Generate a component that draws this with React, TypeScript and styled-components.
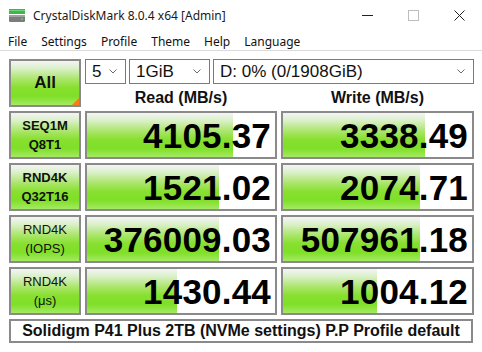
import styled, { createGlobalStyle } from 'styled-components';

const GlobalStyle = createGlobalStyle`
  html, body {
    margin: 0;
    padding: 0;
    background: #ffffff;
  }
  body {
    font-family: 'Liberation Sans', Arial, sans-serif;
  }
`;

type Result = {
  label: string;
  sub: string;
  bold: boolean;
  read: string;
  readFill: number;
  write: string;
  writeFill: number;
};

// fill widths in px, measured inside the cell border
const results: Result[] = [
  { label: 'SEQ1M', sub: 'Q8T1', bold: true, read: '4105.37', readFill: 146, write: '3338.49', writeFill: 142 },
  { label: 'RND4K', sub: 'Q32T16', bold: true, read: '1521.02', readFill: 132, write: '2074.71', writeFill: 137 },
  { label: 'RND4K', sub: '(IOPS)', bold: false, read: '376009.03', readFill: 132, write: '507961.18', writeFill: 137 },
  { label: 'RND4K', sub: '(μs)', bold: false, read: '1430.44', readFill: 90, write: '1004.12', writeFill: 94 },
];

const menus = ['File', 'Settings', 'Profile', 'Theme', 'Help', 'Language'];

const DriveIcon = () => (
  <svg width="18" height="15" viewBox="0 0 18 15">
    <rect x="1" y="0" width="16" height="5" fill="#3cb84a" />
    <rect x="1" y="1" width="16" height="1" fill="#6ad676" />
    <rect x="1" y="6" width="16" height="7" rx="1" fill="#7c7c7c" />
    <rect x="1" y="6" width="16" height="2" fill="#a0a0a0" />
    <rect x="13" y="9" width="2" height="2" fill="#44d050" />
  </svg>
);

const Chevron = () => (
  <svg width="8" height="5" viewBox="0 0 8 5">
    <polyline points="0.5,0.5 4,4 7.5,0.5" fill="none" stroke="#6a6a6a" strokeWidth="1" />
  </svg>
);

const Select = ({ value, width }: { value: string; width: number }) => (
  <$Select $width={width}>
    <span>{value}</span>
    <Chevron />
  </$Select>
);

export default function App() {
  return (
    <$Window>
      <GlobalStyle />
      <$TitleBar>
        <$TitleIcon>
          <DriveIcon />
        </$TitleIcon>
        <$Title>CrystalDiskMark 8.0.4 x64 [Admin]</$Title>
        <$Controls>
          <$Control>
            <svg width="11" height="11" viewBox="0 0 11 11">
              <line x1="0" y1="5.5" x2="11" y2="5.5" stroke="#222" strokeWidth="1" />
            </svg>
          </$Control>
          <$Control>
            <svg width="11" height="11" viewBox="0 0 11 11">
              <rect x="0.5" y="0.5" width="10" height="10" fill="none" stroke="#bdbdbd" strokeWidth="1" />
            </svg>
          </$Control>
          <$Control>
            <svg width="11" height="11" viewBox="0 0 11 11">
              <path d="M0.5 0.5 L10.5 10.5 M10.5 0.5 L0.5 10.5" stroke="#222" strokeWidth="1" />
            </svg>
          </$Control>
        </$Controls>
      </$TitleBar>

      <$MenuBar>
        {menus.map((m) => (
          <$MenuItem key={m}>{m}</$MenuItem>
        ))}
      </$MenuBar>

      <$Body>
        <$AllButton>
          All
          <$Corner />
        </$AllButton>

        <$TopRight>
          <$Selects>
            <Select value="5" width={41} />
            <Select value="1GiB" width={81} />
            <Select value="D: 0% (0/1908GiB)" width={261} />
          </$Selects>
          <$Headers>
            <$Header>Read (MB/s)</$Header>
            <$Header>Write (MB/s)</$Header>
          </$Headers>
        </$TopRight>

        {results.map((r, i) => (
          <$Row key={i}>
            <$Label $bold={r.bold}>
              <span>{r.label}</span>
              <span>{r.sub}</span>
            </$Label>
            <$Value style={{ backgroundSize: `${r.readFill}px 100%` }}>{r.read}</$Value>
            <$Value style={{ backgroundSize: `${r.writeFill}px 100%` }}>{r.write}</$Value>
          </$Row>
        ))}

        <$Comment>Solidigm P41 Plus 2TB (NVMe settings) P.P Profile default</$Comment>
      </$Body>
    </$Window>
  );
}

const $Window = styled.div`
  width: 482px;
  height: 352px;
  background: #ffffff;
  overflow: hidden;
`;

const $TitleBar = styled.div`
  display: flex;
  align-items: center;
  height: 31px;
  font-family: 'Noto Sans', 'Open Sans', sans-serif;
  font-size: 12px;
  color: #1a1a1a;
`;

const $TitleIcon = styled.div`
  display: flex;
  padding: 0 7px 0 8px;
  margin-top: 1px;
`;

const $Title = styled.div`
  flex: 1;
`;

const $Controls = styled.div`
  display: flex;
  align-items: center;
  height: 100%;
`;

const $Control = styled.div`
  display: flex;
  align-items: center;
  justify-content: center;
  width: 46px;
  height: 100%;
`;

const $MenuBar = styled.div`
  display: flex;
  align-items: center;
  height: 18px;
  padding: 1px 0 0 1px;
  border-bottom: 1px solid #dadada;
  font-family: 'Noto Sans', 'Open Sans', sans-serif;
  font-size: 12px;
  color: #111;
`;

const $MenuItem = styled.div`
  padding: 0 7px;
`;

const $Body = styled.div`
  display: grid;
  grid-template-columns: 72px 192px 193px;
  grid-auto-rows: 48px;
  column-gap: 4px;
  row-gap: 4px;
  padding: 8px 0 0 9px;
`;

const greenFace = `linear-gradient(to bottom, #f4f4f4 0%, #dcf1cc 16%, #ade66f 40%, #88e030 60%, #7fdf26 80%, #a4ea62 100%)`;

const $AllButton = styled.div`
  position: relative;
  box-sizing: border-box;
  display: flex;
  align-items: center;
  justify-content: center;
  border: 2px solid #8a8a8a;
  background: ${greenFace};
  font-weight: bold;
  font-size: 17px;
  color: #111;
`;

const $Corner = styled.div`
  position: absolute;
  right: 0;
  bottom: 0;
  width: 0;
  height: 0;
  border-left: 7px solid transparent;
  border-bottom: 7px solid #ff7a10;
`;

const $TopRight = styled.div`
  grid-column: 2 / span 2;
  display: flex;
  flex-direction: column;
`;

const $Selects = styled.div`
  display: flex;
  gap: 3px;
  height: 25px;
`;

const $Select = styled.div<{ $width: number }>`
  box-sizing: border-box;
  display: flex;
  align-items: center;
  justify-content: space-between;
  width: ${({ $width }) => $width}px;
  height: 25px;
  padding: 0 8px 0 6px;
  border: 1px solid #7a7a7a;
  background: #ffffff;
  font-size: 17px;
  color: #111;
`;

const $Headers = styled.div`
  display: grid;
  grid-template-columns: 192px 193px;
  column-gap: 4px;
  flex: 1;
  align-items: center;
  padding-top: 5px;
`;

const $Header = styled.div`
  text-align: center;
  font-weight: bold;
  font-size: 16px;
  color: #111;
`;

const $Row = styled.div`
  display: contents;
`;

const $Label = styled.div<{ $bold: boolean }>`
  box-sizing: border-box;
  display: flex;
  flex-direction: column;
  align-items: center;
  justify-content: center;
  gap: 4px;
  border: 2px solid #8a8a8a;
  background: ${greenFace};
  font-weight: ${({ $bold }) => ($bold ? 'bold' : 'normal')};
  font-size: 13px;
  line-height: 15px;
  color: #111;
`;

const $Value = styled.div`
  box-sizing: border-box;
  display: flex;
  align-items: center;
  justify-content: flex-end;
  padding: 1px 4px 0 0;
  border: 2px solid #8a8a8a;
  background-color: #ffffff;
  background-image: ${greenFace};
  background-repeat: no-repeat;
  font-weight: bold;
  font-size: 35px;
  letter-spacing: 0.2px;
  color: #000;
`;

const $Comment = styled.div`
  grid-column: 1 / span 3;
  box-sizing: border-box;
  display: flex;
  align-items: center;
  justify-content: center;
  width: 464px;
  height: 24px;
  border: 2px solid #8a8a8a;
  white-space: nowrap;
  font-weight: bold;
  font-size: 16px;
  color: #111;
`;
